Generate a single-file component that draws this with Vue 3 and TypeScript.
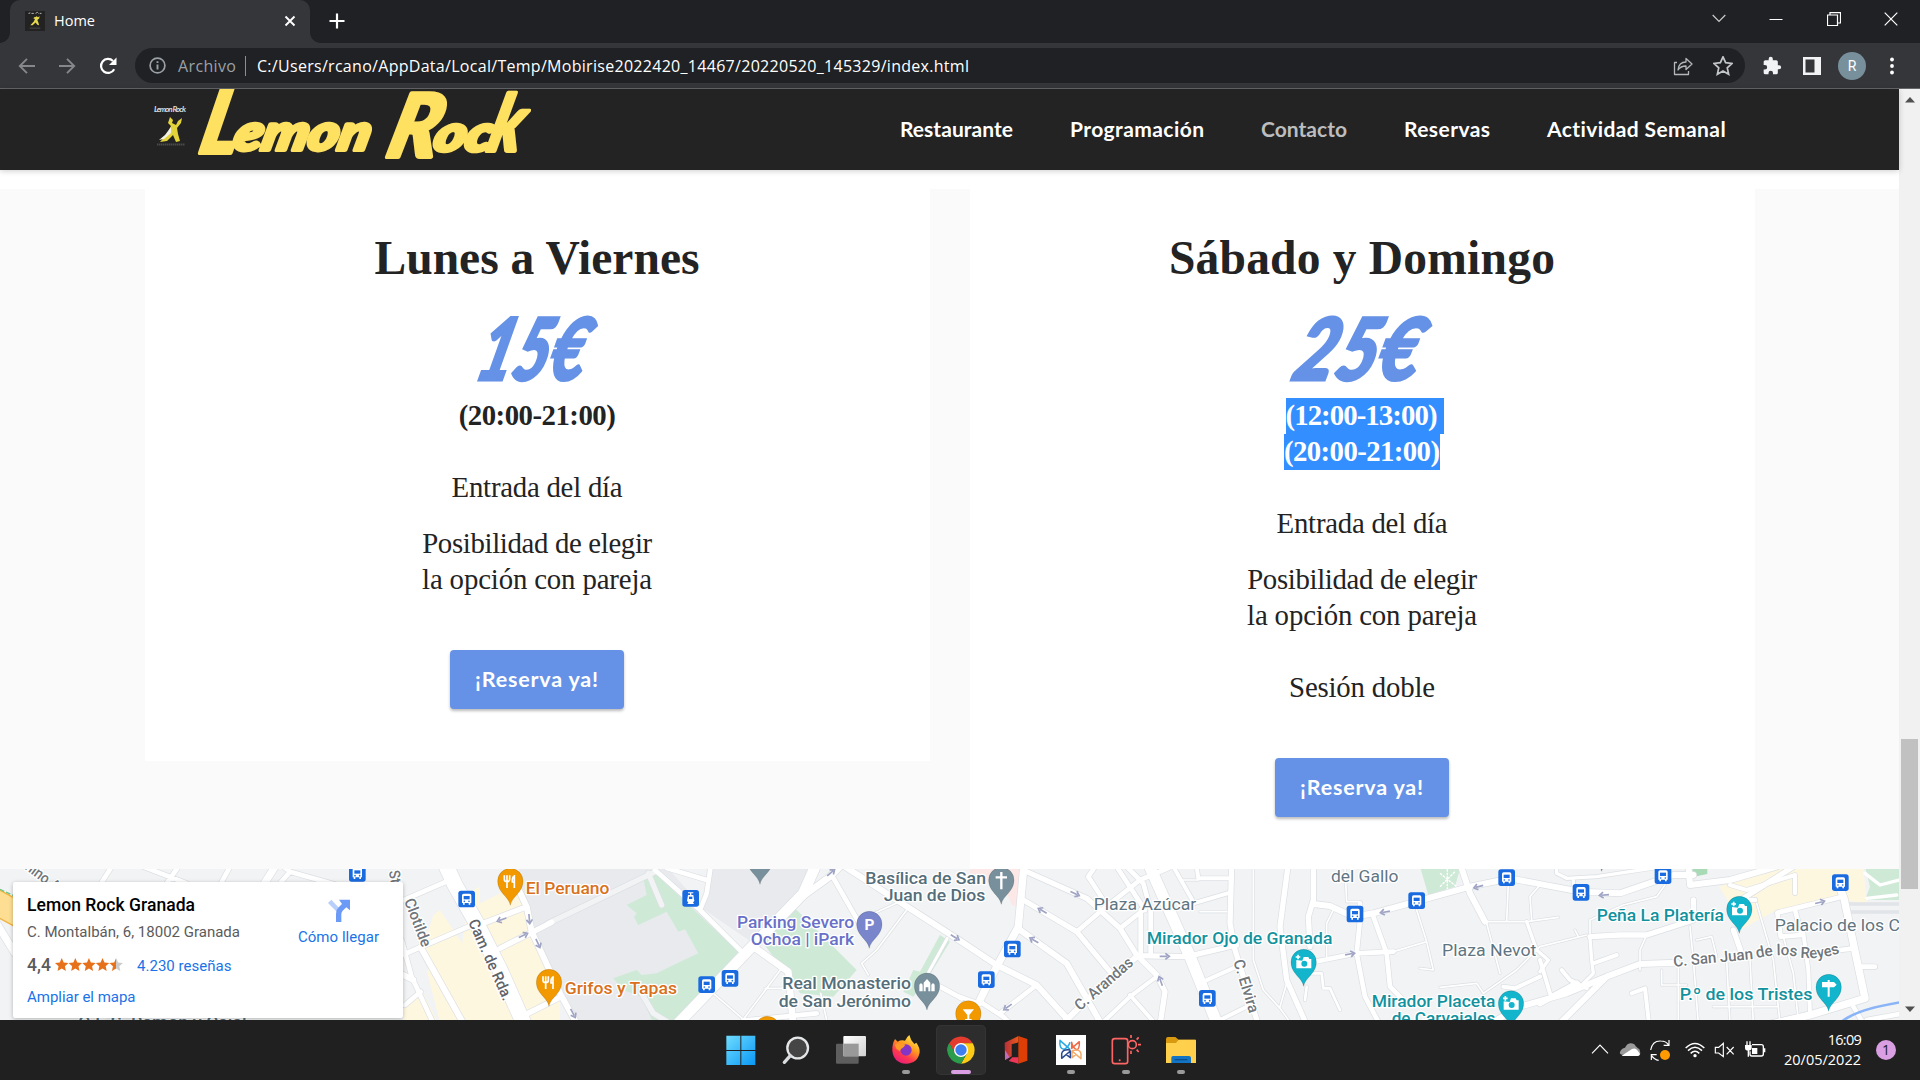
<script setup lang="ts">
interface Road { x: number; w: number; d: string; c?: string }
interface Label { x: number; y: number; len: number; t: string; c: string; r?: number; s?: number; wt?: number }
interface Pin { x: number; y: number; c: string; k: string }

// Spreads the letters of a line so that it fills the given width in pixels.
const vFit = {
  mounted(el: HTMLElement, binding: { value: number }) {
    const range = document.createRange()
    range.selectNodeContents(el)
    const natural = range.getBoundingClientRect().width
    const count = (el.textContent ?? '').trim().length
    el.style.letterSpacing = `${(binding.value - natural) / Math.max(1, count - 1)}px`
  },
}

const navItems = [
  { t: 'Restaurante', w: 113 },
  { t: 'Programación', w: 134 },
  { t: 'Contacto', w: 86, dim: true },
  { t: 'Reservas', w: 86 },
  { t: 'Actividad Semanal', w: 179 },
]

const T1 = 1440, T2 = 2880, T3 = 4320

const areas = [
  { x: 0, f: '#fef7e0', d: 'M1300 165L1320 150L1440 330V480H1400L1270 260ZM1209 430L1270 400L1310 480H1209ZM1400 100L1440 80V160Z' },
  { x: T1, f: '#e8eaed', d: 'M115 20H560L780 270L590 490H300L160 220L130 120ZM700 20H1010L960 110L820 250L660 140Z' },
  { x: T1, f: '#fef7e0', d: 'M-40 150L110 75L150 215L240 400V490H-120L-160 330L-60 300Z' },
  { x: T1, f: '#ceead6', d: 'M525 40L775 275L590 490H520L485 410L430 390L400 355L470 330L485 345L530 340L580 315L655 280L615 208L595 215L560 155L475 195L462 172L470 160L440 135L500 105L490 55Z' },
  { x: T1, f: '#ceead6', d: 'M945 145L1130 330L1060 410L960 400L880 290L850 250ZM1380 225L1410 245L1340 360L1300 410L1270 395L1300 330L1320 335Z' },
  { x: T2, f: '#fce8e6', d: 'M30 20H190L182 145L155 135L140 95L30 40Z' },
  { x: T2, f: '#ceead6', d: 'M1380 20H1500L1485 80L1405 105Z' },
  { x: T3, f: '#fef7e0', d: 'M838 80L1000 20H1270L1280 130L1200 120L1000 155L900 210L880 150Z' },
  { x: T3, f: '#ceead6', d: 'M1275 20H1377V120H1275L1290 80Z' },
  { x: T3, f: '#a8dab5', d: 'M755 20H802V42L762 50Z' },
]

const roads: Road[] = [
  { x: 0, w: 14, d: 'M335 20L300 75M430 20L560 70M535 20L500 70M690 20L660 75M870 35L1010 75M850 20L870 35L840 70' },
  { x: 0, w: 22, d: 'M825 20L790 75M-10 190L45 280' },
  { x: 0, w: 14, d: 'M1200 125L1350 60M1200 288L1440 185M1215 435L1262 395M1205 240L1235 350L1300 490' },
  { x: 0, w: 18, d: 'M1262 262L1390 490M1200 340L1240 360' },
  { x: 0, w: 46, d: 'M1335 10L1365 75L1430 190L1500 330L1580 510' },
  { x: T1, w: 16, c: '#f1f3f4', d: 'M205 190L520 38M505 40L545 135M485 400L520 460L570 490' },
  { x: T1, w: 16, d: 'M10 190L140 140M60 265L150 220L215 187M140 462L240 412' },
  { x: T1, w: 18, d: 'M100 55L140 140L155 215L190 290L240 400L295 500' },
  { x: T1, w: 14, d: 'M525 30L660 150L780 270M560 24L680 60M692 20L680 100L660 150' },
  { x: T1, w: 32, d: 'M590 495L830 245L970 100L1010 10' },
  { x: T1, w: 20, d: 'M960 115L1050 50L1080 20M820 260L925 335L940 500' },
  { x: T1, w: 14, d: 'M1055 45L1155 220M790 482L1010 460M1380 380L1445 415' },
  { x: T1, w: 18, d: 'M1095 20L1440 242L1550 315L1670 375L1760 475' },
  { x: T1, w: 5, d: 'M1280 150L1190 270L1145 310L1165 345M1270 120L1160 170M930 385H855M905 325L790 478L700 400M1022 400L1040 480' },
  { x: T1, w: 9, d: 'M1402 235L1345 338' },
  { x: T2, w: 22, d: 'M192 15L175 200L110 320L60 420' },
  { x: T2, w: 16, d: 'M200 35L380 115L480 205L530 285L590 345L615 395L600 495M190 120L350 215L450 335' },
  { x: T2, w: 18, d: 'M180 210L320 310L420 485M300 500L380 420L530 290' },
  { x: T2, w: 14, d: 'M60 425L130 470L160 500M120 460L230 375M350 215L420 155L540 60L625 24M405 20L385 50L430 120M470 20L555 150M500 20L550 70L572 150V285M542 150V285M480 205L550 150' },
  { x: T2, w: 16, d: 'M530 287L680 290L830 255' },
  { x: T2, w: 34, d: 'M565 10L690 290L775 500' },
  { x: T2, w: 12, d: 'M640 20L700 125M710 20L715 55H810M700 130L810 98M730 365L830 320M770 485L860 440M420 495L510 410L590 350M510 405L585 490M0 410L60 432' },
  { x: T2, w: 16, d: 'M815 15L810 190L825 270L850 350L895 495' },
  { x: T2, w: 5, d: 'M670 60H715M720 155H800M880 20V300L910 390L960 445L1000 500M1300 275L1400 245L1370 150M1400 245L1420 330L1380 325M1125 140L1100 190V290M1155 27L1160 125H1200M960 440L980 370' },
  { x: T2, w: 16, d: 'M985 10L960 200L980 360L1040 495M1060 10V120L1045 170L1050 260' },
  { x: T2, w: 18, d: 'M1060 132L1110 138L1180 170L1240 160L1530 80L1650 55L1860 95L1980 100L2140 45L2200 45' },
  { x: T2, w: 14, d: 'M1200 130V180L1190 280L1215 410L1260 495M1065 305L1190 280L1300 275M1240 170L1280 280L1290 380L1330 420' },
  { x: T2, w: 8, d: 'M1040 340H1085L1090 385H1110L1140 450M1040 380L1035 420' },
  { x: T3, w: 5, d: 'M135 185H260L355 172M140 190L180 340M205 70L200 185M300 75L270 110L275 180M620 225L600 270V330M750 200L760 300L775 490M860 300L870 490M950 130L1000 300L1020 490M930 300L940 490M1030 230L1060 340L1075 480M665 330V375H740M715 310V490M820 440H1010M770 240L815 230L830 290M0 382L110 370L130 400L230 330L300 260L440 225M405 210L415 230M675 75L650 110L550 135M450 220V180L550 135' },
  { x: T3, w: 18, d: 'M60 10L90 100L135 185M745 15L750 75L870 60L1010 20' },
  { x: T3, w: 10, d: 'M350 10V40L380 55L470 50L640 24M400 60V85M260 185L290 270L325 300L300 335M450 235L455 300L460 340L430 370' },
  { x: T3, w: 16, d: 'M450 230L540 225L620 225L760 180V120M880 210L905 280M910 115L1060 20' },
  { x: T3, w: 12, d: 'M460 310L530 285M300 300L330 400M365 330L390 360L440 385M190 380L225 385L300 350M575 400L615 385L628 500M870 75L920 90L1065 45V100M1110 465L1105 330L1090 220' },
  { x: T3, w: 18, d: 'M170 480L240 440L380 400L500 350L600 312L710 308M350 500L440 410L500 350M410 370L300 430' },
  { x: T3, w: 14, d: 'M1200 112L1012 158L1022 230L1085 225L1065 150M1260 320H1305M1240 265L1200 270M1240 440L1270 490M1280 480L1380 462M905 120H945' },
  { x: T3, w: 22, d: 'M1190 60L1212 115L1240 250L1275 415L1110 465L960 500' },
]

const labels: Label[] = [
  { x: 62, y: 18, len: 130, t: 'mino A', c: '#70757a', r: 37, s: 46 },
  { x: 1166, y: 34, len: 60, t: 'Sta', c: '#70757a', r: 80, s: 46 },
  { x: 1212, y: 122, len: 152, t: 'Clotilde', c: '#70757a', r: 69, s: 46 },
  { x: 1404, y: 186, len: 262, t: 'Cam. de Rda.', c: '#5f6368', r: 66, s: 46 },
  { x: 235, y: 503, len: 505, t: 'C.E.S. Ramón y Cajal', c: '#546e7a' },
  { x: T1 + 137, y: 102, len: 251, t: 'El Peruano', c: '#d9711c' },
  { x: T1 + 254, y: 403, len: 337, t: 'Grifos y Tapas', c: '#d9711c' },
  { x: T1 + 771, y: 204, len: 351, t: 'Parking Severo', c: '#6870c8' },
  { x: T1 + 812, y: 256, len: 310, t: 'Ochoa | iPark', c: '#6870c8' },
  { x: T1 + 907, y: 388, len: 386, t: 'Real Monasterio', c: '#546e7a' },
  { x: T1 + 896, y: 440, len: 397, t: 'de San Jerónimo', c: '#546e7a' },
  { x: T1 + 1156, y: 72, len: 362, t: 'Basílica de San', c: '#546e7a' },
  { x: T1 + 1211, y: 124, len: 305, t: 'Juan de Dios', c: '#546e7a' },
  { x: T2 + 401, y: 149, len: 308, t: 'Plaza Azúcar', c: '#5f7682', wt: 400 },
  { x: T2 + 560, y: 253, len: 557, t: 'Mirador Ojo de Granada', c: '#12929e' },
  { x: T2 + 1113, y: 65, len: 202, t: 'del Gallo', c: '#5f7682', wt: 400 },
  { x: T2 + 1235, y: 440, len: 371, t: 'Mirador Placeta', c: '#12929e' },
  { x: T2 + 1295, y: 492, len: 311, t: 'de Carvajales', c: '#12929e' },
  { x: T2 + 360, y: 454, len: 216, t: 'C. Arandas', c: '#70757a', r: -41, s: 46 },
  { x: T2 + 820, y: 304, len: 165, t: 'C. Elvira', c: '#70757a', r: 73, s: 46 },
  { x: T3 + 470, y: 184, len: 382, t: 'Peña La Platería', c: '#12929e' },
  { x: T3 + 1004, y: 213, len: 376, t: 'Palacio de los C', c: '#5f7682', wt: 400 },
  { x: T3 + 6, y: 287, len: 283, t: 'Plaza Nevot', c: '#5f7682', wt: 400 },
  { x: T3 + 719, y: 419, len: 398, t: 'P.º de los Tristes', c: '#12929e' },
]

const stops = [
  [1072, 40], [1400, 117], [T1 + 680, 374], [T1 + 750, 355], [T2 + 157, 267], [T2 + 79, 359],
  [T2 + 742, 415], [T2 + 1185, 162], [T2 + 1370, 122], [T3 + 200, 53], [T3 + 423, 97], [T3 + 669, 47], [T3 + 1201, 68],
]

const arrows = [
  [T1 + 65, 179, 160], [T1 + 148, 177, 85], [T1 + 130, 226, -25], [T1 + 174, 250, 65], [T1 + 279, 460, 62], [T1 + 1053, 38, -40], [T1 + 1425, 232, 32],
  [T2 + 345, 101, 25], [T2 + 247, 152, 210], [T2 + 222, 241, 210], [T2 + 143, 441, 145], [T2 + 614, 289, 0], [T2 + 602, 363, 250],
  [T2 + 1275, 156, 170], [T2 + 1170, 282, -10], [T3 + 115, 80, 165], [T3 + 492, 105, 175], [T3 + 1140, 127, -14],
]

const pins: Pin[] = [
  { x: T1 + 91, y: 63, c: '#f29900', k: 'food' },
  { x: T1 + 207, y: 366, c: '#f29900', k: 'food' },
  { x: T1 + 840, y: 0, c: '#78909c', k: '' },
  { x: T1 + 862, y: 507, c: '#f29900', k: '' },
  { x: T1 + 1168, y: 192, c: '#7986cb', k: 'park' },
  { x: T1 + 1341, y: 377, c: '#78909c', k: 'castle' },
  { x: T2 + 124, y: 60, c: '#78909c', k: 'cross' },
  { x: T2 + 25, y: 460, c: '#f29900', k: 'bar' },
  { x: T2 + 1031, y: 306, c: '#12b5cb', k: 'photo' },
  { x: T3 + 898, y: 147, c: '#12b5cb', k: 'photo' },
  { x: T3 + 213, y: 430, c: '#12b5cb', k: 'photo' },
  { x: T3 + 1166, y: 381, c: '#12b5cb', k: 'sign' },
  { x: T3 + 485, y: -39, c: '#12b5cb', k: '' },
]
const star = 'M10 0L12.9 6.4L20 7.2L14.7 12L16.2 19L10 15.4L3.8 19L5.3 12L0 7.2L7.1 6.4Z'
</script>

<template>
  <div class="screen">
    <div class="tabbar">
      <div class="tab">
        <svg class="favicon" viewBox="0 0 34 42" preserveAspectRatio="none">
          <rect width="34" height="42" fill="#222" />
          <path d="M6 5l3-1M11 5h4M18 5l3-2 2 2M25 5h3" stroke="#ddd" stroke-width="1.500" />
          <path d="M17 13l3-2 2 2 3-2-1 5-3 3 2 6 1 5-3-1-3-5-5 6-4 0 6-8 2-5-3-2 3-3z" fill="#e5d84e" />
          <path d="M8 36h18" stroke="#555" stroke-width="1.500" />
        </svg>
        <span v-fit="41" class="tab-title">Home</span>
        <svg class="tab-x" width="12" height="12" viewBox="0 0 12 12"><path d="M1.5 1.5l9 9M10.500 1.500l-9 9" stroke="#fff" stroke-width="1.9" /></svg>
      </div>
      <svg class="plus" width="16" height="16" viewBox="0 0 16 16"><path d="M8 .5v15M.5 8h15" stroke="#fff" stroke-width="2.200" /></svg>
      <div class="window-controls">
        <span><svg width="14" height="9" viewBox="0 0 14 9"><path d="M.7 1L7 7.500L13.300 1" fill="none" stroke="#ccc" stroke-width="1.200" /></svg></span>
        <span><svg width="14" height="14" viewBox="0 0 14 14"><path d="M.5 7.500h13" stroke="#fff" /></svg></span>
        <span><svg width="14" height="14" viewBox="0 0 14 14"><path d="M.5 3h10v10.500H.5zM3 3V.7h10.500V11H11" fill="none" stroke="#fff" stroke-width="1.200" /></svg></span>
        <span><svg width="14" height="14" viewBox="0 0 14 14"><path d="M.7.700l12.600 12.600M13.300.700L.7 13.300" stroke="#fff" stroke-width="1.200" /></svg></span>
      </div>
    </div>

    <div class="toolbar">
      <div class="nav-icons">
        <svg width="18" height="18" viewBox="0 0 18 18"><path d="M17 9H2M9 1.800L1.800 9L9 16.200" fill="none" stroke="#85878a" stroke-width="1.900" /></svg>
        <svg width="18" height="18" viewBox="0 0 18 18"><path d="M1 9h15M9 1.800L16.200 9L9 16.200" fill="none" stroke="#85878a" stroke-width="1.900" /></svg>
        <svg width="20" height="20" viewBox="0 0 20 20"><path d="M16.200 13.200A7 7 0 1 1 15 5" fill="none" stroke="#fff" stroke-width="2.200" /><path d="M18.500 1.500V9H11z" fill="#fff" /></svg>
      </div>
      <div class="omnibox">
        <svg width="17" height="17" viewBox="0 0 17 17"><circle cx="8.500" cy="8.500" r="7.400" fill="none" stroke="#9aa0a6" stroke-width="1.700" /><path d="M8.500 7.500v5M8.500 4.300v1.800" stroke="#9aa0a6" stroke-width="1.900" /></svg>
        <span v-fit="58" class="scheme">Archivo</span>
        <i class="bar"></i>
        <span v-fit="712" class="url">C:/Users/rcano/AppData/Local/Temp/Mobirise2022420_14467/20220520_145329/index.html</span>
        <div class="slots right">
          <span><svg width="20" height="20" viewBox="0 0 20 20"><path d="M4 6.500H1.500V18.500H15.500V15M5 14c.5-5 3.500-8 8-8V2.500L19 8l-6 5.500V10c-3.500 0-6 1-8 4z" fill="none" stroke="#b4b7ba" stroke-width="1.300" stroke-linejoin="round" /></svg></span>
          <span><svg width="20" height="20" viewBox="-1 -1 22 22"><path :d="star" fill="none" stroke="#c4c7ca" stroke-width="1.900" /></svg></span>
        </div>
      </div>
      <div class="slots">
        <span><svg width="20" height="20" viewBox="0 0 24 24"><path fill="#f1f3f4" d="M20.500 11H19V7a2 2 0 0 0-2-2h-4V3.500a2.500 2.500 0 0 0-5 0V5H4a2 2 0 0 0-2 2v3.800h1.500a2.700 2.700 0 0 1 0 5.400H2V20a2 2 0 0 0 2 2h3.800v-1.500a2.700 2.700 0 0 1 5.400 0V22H17a2 2 0 0 0 2-2v-4h1.500a2.500 2.500 0 0 0 0-5z" /></svg></span>
        <span><svg width="18" height="18" viewBox="0 0 18 18"><path fill="#f1f3f4" fill-rule="evenodd" d="M0 0H18V18H0ZM2.500 2.500V15.500H11.500V2.500Z" /></svg></span>
        <span><b class="avatar">R</b></span>
        <span><svg width="4" height="18" viewBox="0 0 4 18"><g fill="#fff"><circle cx="2" cy="2.500" r="1.900" /><circle cx="2" cy="9" r="1.900" /><circle cx="2" cy="15.500" r="1.900" /></g></svg></span>
      </div>
    </div>

    <div class="viewport">
      <div class="page">
        <header class="navbar">
          <svg class="brand" width="420" height="81" viewBox="140 89 420 81">
            <g>
              <text x="154" y="112" font-size="8" fill="#ddd" textLength="32" class="script small">Lemon Rock</text>
              <path d="M170 117l3 3-1 3 4 2 2-4 4-3-1 5-4 5 1 6 2 7-4 1-3-7-6 6-7 1 7-8 4-8-3-3z" fill="#e3d33a" />
              <path d="M171 127l-6 8-6 5 5-1 7-6z" fill="#f2f2e6" />
              <path d="M157 144.500h28" stroke="#4b4b4b" stroke-width="2" stroke-dasharray="1.500 .5" />
            </g>
            <g class="script" fill="#ffe161" stroke="#ffe161" stroke-width="4" stroke-linejoin="round">
              <text transform="translate(197 153) skewX(-13)"><tspan font-size="88" textLength="38" lengthAdjust="spacingAndGlyphs">L</tspan><tspan dx="-4" dy="-3" font-size="50" textLength="136" lengthAdjust="spacingAndGlyphs">emon</tspan></text>
              <text transform="translate(384 157) skewX(-15)"><tspan font-size="88" textLength="50" lengthAdjust="spacingAndGlyphs">R</tspan><tspan dx="-4" dy="-6" font-size="50" textLength="58" lengthAdjust="spacingAndGlyphs">oc</tspan><tspan dx="-4" font-size="78" textLength="32" lengthAdjust="spacingAndGlyphs">k</tspan></text>
            </g>
          </svg>
          <nav>
            <a v-for="n in navItems" :key="n.t" v-fit="n.w" :class="{ dim: n.dim }">{{ n.t }}</a>
          </nav>
        </header>

        <main class="pricing">
          <section class="card short">
            <h2 v-fit="325">Lunes a Viernes</h2>
            <svg class="price" width="200" height="110" viewBox="0 0 200 110">
              <text class="script" transform="translate(36 92) skewX(-15)" font-size="86" textLength="108" lengthAdjust="spacingAndGlyphs" fill="#6592e6" stroke="#6592e6" stroke-width="3">15€</text>
            </svg>
            <p class="line hours"><span v-fit="157">(20:00-21:00)</span></p>
            <p class="line gap-36"><span v-fit="171">Entrada del día</span></p>
            <p class="line gap-20"><span v-fit="230">Posibilidad de elegir</span></p>
            <p class="line"><span v-fit="230">la opción con pareja</span></p>
            <a class="button"><span v-fit="123">¡Reserva ya!</span></a>
          </section>
          <section class="card">
            <h2 v-fit="386">Sábado y Domingo</h2>
            <svg class="price" width="200" height="110" viewBox="0 0 200 110">
              <text class="script" transform="translate(28 92) skewX(-15)" font-size="86" textLength="125" lengthAdjust="spacingAndGlyphs" fill="#6592e6" stroke="#6592e6" stroke-width="3">25€</text>
            </svg>
            <p class="line hours selected wide"><span v-fit="152">(12:00-13:00)</span></p>
            <p class="line hours selected"><span v-fit="156">(20:00-21:00)</span></p>
            <p class="line gap-36"><span v-fit="171">Entrada del día</span></p>
            <p class="line gap-20"><span v-fit="230">Posibilidad de elegir</span></p>
            <p class="line"><span v-fit="230">la opción con pareja</span></p>
            <p class="line gap-36"><span v-fit="146">Sesión doble</span></p>
            <a class="button"><span v-fit="123">¡Reserva ya!</span></a>
          </section>
        </main>

        <div class="map">
          <svg class="map-canvas" width="1899" height="151" viewBox="0 27 5697 453">
            <defs>
              <path id="reyes-street" d="M5021 320L5260 297Q5340 276 5410 294Q5470 298 5530 275" />
            </defs>
            <rect y="27" width="5697" height="453" fill="#f1f3f4" />
            <path v-for="(a, i) in areas" :key="'a' + i" :d="a.d" :fill="a.f" :transform="`translate(${a.x})`" />
            <path d="M-10 85L45 115V200L-10 170Z" fill="#fdde93" stroke="#f3b23c" stroke-width="4" />
            <path d="M0 88L39 106" stroke="#6dc58b" stroke-width="4" stroke-dasharray="14 6" />
            <path d="M4320 27H4380L4365 75L4320 90Z" fill="#ceead6" />
            <path d="M4320 40L4370 80M4320 80L4365 35M4342 27V90" stroke="#fff" stroke-width="4" stroke-dasharray="8 3" />
            <path d="M5535 132H5697M5535 156H5697" stroke="#e1e4e8" stroke-width="10" />
            <g fill="none" stroke-linejoin="round" stroke-linecap="round">
              <path v-for="(r, i) in roads" :key="'c' + i" :d="r.d" :transform="`translate(${r.x})`" stroke="#dcdfe3" :stroke-width="r.w + 4" />
              <path v-for="(r, i) in roads" :key="'r' + i" :d="r.d" :transform="`translate(${r.x})`" :stroke="r.c ?? '#fff'" :stroke-width="r.w" />
              <path d="M5595 40L5640 75L5697 60M5600 115L5690 105" stroke="#fff" stroke-width="10" />
              <path d="M5525 485Q5570 448 5700 427" stroke="#8ab4f8" stroke-width="8" />
            </g>
            <g v-for="(a, i) in arrows" :key="'w' + i" :transform="`translate(${a[0]} ${a[1]}) rotate(${a[2]})`">
              <path d="M-15 0H8M2 -9L14 0L2 9" fill="none" stroke="#9fa3c4" stroke-width="5" />
            </g>
            <g v-for="(s, i) in stops" :key="'s' + i" :transform="`translate(${s[0]} ${s[1]})`">
              <rect x="-25" y="-25" width="50" height="50" rx="8" fill="#1a6be0" />
              <path d="M-14 12V-11Q-14 -16 -9 -16H9Q14 -16 14 -11V12H11V17H6V12H-6V17H-11V12Z" fill="#fff" />
              <path d="M-9 -9H9V1H-9Z" fill="#1a6be0" /><circle cx="-7" cy="7" r="2.500" fill="#1a6be0" /><circle cx="7" cy="7" r="2.500" fill="#1a6be0" />
            </g>
            <g transform="translate(2072 115)">
              <rect x="-25" y="-25" width="50" height="50" rx="8" fill="#1a6be0" />
              <path d="M-8 -18H8V-15H2V-10H8L11 8L7 12L10 17H-10L-7 12L-11 8L-8 -10H-2V-15H-8Z" fill="#fff" />
              <path d="M-5 -5H5V2H-5Z" fill="#1a6be0" />
            </g>
            <g class="labels">
              <text v-for="(l, i) in labels" :key="'l' + i" :transform="`translate(${l.x} ${l.y}) rotate(${l.r ?? 0})`" :font-size="l.s ?? 51" :font-weight="l.wt ?? 500" :fill="l.c" :textLength="l.len" lengthAdjust="spacingAndGlyphs">{{ l.t }}</text>
              <text font-size="46" font-weight="500" fill="#70757a"><textPath href="#reyes-street" textLength="504">C. San Juan de los Reyes</textPath></text>
            </g>
            <g v-for="(p, i) in pins" :key="'p' + i" :transform="`translate(${p.x} ${p.y})`">
              <path d="M0 73C-5 45 -38 36 -38 0A38 38 0 0 1 38 0C38 36 5 45 0 73Z" :fill="p.c" stroke="#0003" stroke-width="2" />
              <path v-if="p.k === 'food'" d="M-18 -17V-5Q-18 2 -10 2V21M-10 -17V0M-2 -17V-5Q-2 2 -10 2M12 21V-15Q5 -12 6 3H12" fill="none" stroke="#fff" stroke-width="5" />
              <text v-else-if="p.k === 'park'" x="0" y="17" text-anchor="middle" class="park">P</text>
              <path v-else-if="p.k === 'castle'" d="M-23 17V-3L-18 -8L-13 -3V17ZM-10 17V-9L0 -20L10 -9V17H4V5H-4V17ZM13 17V-3L18 -8L23 -3V17Z" fill="#fff" />
              <path v-else-if="p.k === 'cross'" d="M0 -24V28M-17 -8H17" stroke="#fff" stroke-width="7" />
              <path v-else-if="p.k === 'bar'" d="M-17 -12H17L3 5V17H10V20H-10V17H-3V5Z" fill="#fff" />
              <g v-else-if="p.k === 'photo'">
                <path d="M-22 -6L-4 -4L0 -15H14L17 -9H23V19H-22Z" fill="#fff" /><circle cx="2" cy="5" r="9" :fill="p.c" /><path d="M-17 -22V-8M-24 -15H-10" stroke="#fff" stroke-width="5" />
              </g>
              <path v-else-if="p.k === 'sign'" d="M-20 -15H-3V-21H3V-15H16L24 -7L16 1H3V29H-3V1H-20Z" fill="#fff" />
            </g>
          </svg>

          <div class="place">
            <div class="place-info">
              <div class="place-name"><span v-fit="168">Lemon Rock Granada</span></div>
              <div class="address"><span v-fit="213">C. Montalbán, 6, 18002 Granada</span></div>
              <div class="rating">
                <b v-fit="24">4,4</b>
                <svg width="68" height="15" viewBox="0 0 101 21">
                  <defs><linearGradient id="half"><stop offset=".5" stop-color="#e7711b" /><stop offset=".5" stop-color="#ccc" /></linearGradient></defs>
                  <path v-for="n in 5" :key="n" :d="star" :transform="`translate(${(n - 1) * 20.200} 1)`" :fill="n === 5 ? 'url(#half)' : '#e7711b'" />
                </svg>
                <a v-fit="94.500">4.230 reseñas</a>
              </div>
              <a class="larger"><span v-fit="108.500">Ampliar el mapa</span></a>
            </div>
            <div class="directions">
              <svg width="22" height="23" viewBox="0 0 66 69"><path d="M0 12L10 2L36 30L30 42Z" fill="#b8cffb" /><path d="M24 69V44Q24 32 32 25L42 15L33 2H66V34L55 25L44 35Q40 40 40 46V69Z" fill="#6b9bf6" /></svg>
              <a v-fit="81">Cómo llegar</a>
            </div>
          </div>
        </div>
      </div>

      <div class="scrollbar">
        <svg width="10" height="6" viewBox="0 0 10 6"><path d="M0 5.500L5 0L10 5.500Z" fill="#505050" /></svg>
        <i></i>
        <svg class="down" width="10" height="6" viewBox="0 0 10 6"><path d="M0 .5L5 6L10 .5Z" fill="#505050" /></svg>
      </div>
    </div>

    <footer class="taskbar">
      <div class="apps">
        <span><svg viewBox="0 0 90 90"><defs><linearGradient id="win" x1="0" y1="0" x2="1" y2="1"><stop stop-color="#6fdcff" /><stop offset="1" stop-color="#0a98f5" /></linearGradient></defs><path fill="url(#win)" d="M1 2H43V45H1ZM46 2H88V45H46ZM1 48H43V90H1ZM46 48H88V90H46Z" /></svg></span>
        <span><svg viewBox="0 0 90 90"><circle cx="50" cy="39" r="31" fill="#454545" stroke="#e4e6e8" stroke-width="7" /><path d="M28 62L10 82" stroke="#dadde0" stroke-width="10" stroke-linecap="round" /></svg></span>
        <span><svg viewBox="0 0 90 90"><defs><linearGradient id="tv" x1="0" y1="0" x2="1" y2="1"><stop stop-color="#fff" /><stop offset="1" stop-color="#d0d0d0" /></linearGradient></defs><rect y="26" width="68" height="60" rx="3" fill="#5e5e5e" /><rect x="22" y="3" width="68" height="61" rx="3" fill="url(#tv)" /><path d="M22 26H68V64H22Z" fill="#999" /></svg></span>
        <span><svg viewBox="0 0 90 90"><defs><linearGradient id="ff" x1=".8" y1="0" x2=".2" y2="1"><stop stop-color="#fff44f" /><stop offset=".4" stop-color="#ff9a1f" /><stop offset=".7" stop-color="#ff3750" /><stop offset="1" stop-color="#e21b86" /></linearGradient></defs><path d="M12 12L20 20Q30 14 42 17Q48 5 55 0Q59 17 70 27L76 23Q87 38 86 52Q80 86 45 86Q8 84 4 47Q3 27 12 12Z" fill="url(#ff)" /><circle cx="45" cy="45" r="17" fill="#8535c5" /><path d="M11 29Q26 20 43 30L36 38Q28 40 27 48L17 43Z" fill="#ff9a28" /></svg><i></i></span>
        <span class="active"><svg viewBox="0 0 90 90"><path d="M45 45L9.600 24.500A41 41 0 0 1 80.400 24.500H45Z" fill="#e33b2e" /><path d="M45 24.500H80.400A41 41 0 0 1 45 86L62.700 55.200Z" fill="#fdcb16" /><path d="M9.600 24.500A41 41 0 0 0 45 86L62.700 55.200L27.300 55.200Z" fill="#2a9c4b" /><path d="M45 24.500L9.600 24.500L27.300 55.200L45 45Z" fill="#e33b2e" /><path d="M9.600 24.500L27.300 55.200L9 60Q-2 43 9.600 24.500Z" fill="#2a9c4b" /><circle cx="45" cy="45" r="21" fill="#fff" /><circle cx="45" cy="45" r="17" fill="#3d7ff0" /></svg><i class="on"></i></span>
        <span><svg viewBox="0 0 90 90"><defs><linearGradient id="of"><stop stop-color="#b5303c" /><stop offset="1" stop-color="#e85a1a" /></linearGradient></defs><path d="M11 23L52 3V22L32 28V64L12 75Z" fill="url(#of)" /><path d="M52 3L79 12V77L52 86Z" fill="#dc3e06" /><path d="M23 78L34 67H52V86Z" fill="#ee3659" /><path d="M12 75L12 45L26 67Z" fill="#c26bb8" /></svg></span>
        <span><svg viewBox="0 0 90 90"><rect width="90" height="90" fill="#fff" /><g fill="none" stroke-width="4.500" stroke-linejoin="round"><path d="M42 43L12 16Q9 42 24 43Q37 38 42 22" stroke="#29a9e0" /><path d="M43 45Q20 42 17 56V70L43 48V68L30 58" stroke="#2b4a90" /><path d="M70 20L47 40V22Q50 38 62 44Q71 43 70 20Z" stroke="#ef6a45" /><path d="M48 47Q72 40 75 56V71L48 48V68L60 58" stroke="#f2ab6a" /></g></svg><i></i></span>
        <span><svg viewBox="0 0 90 90"><g fill="none" stroke="#ff6464" stroke-width="5"><rect x="4" y="11" width="46" height="75" rx="7" /><circle cx="64" cy="29" r="12" /><path d="M60 0V9M83 7L77 14M81 29H90M77 44L83 51M60 47V57" /></g><circle cx="26" cy="76" r="3" fill="#ff6464" /></svg><i></i></span>
        <span><svg viewBox="0 0 90 90"><path d="M0 12Q0 6 6 6H28L38 14H90V45H0Z" fill="#d99a10" /><path d="M0 24H30L38 14H86Q90 14 90 18V84H0Z" fill="#ffd04c" /><path d="M16 84V68Q16 63 21 63H69Q75 63 75 68V84Z" fill="#1474c4" /><path d="M26 74H64" stroke="#0b4e90" stroke-width="4" /></svg><i></i></span>
      </div>
      <div class="tray">
        <svg class="tray-icons" width="180" height="24" viewBox="0 0 540 72" fill="none">
          <path d="M6 46L30 21L54 46" stroke="#fff" stroke-width="3.500" />
          <path d="M90 42Q95 30 105 29Q115 10 133 19Q142 32 148 33Q153 48 149 50H96Q88 48 90 42Z" fill="#9a9a9a" /><path d="M95 53L126 33Q136 28 142 37L150 48Q148 55 143 54H98Z" fill="#fff" />
          <path d="M182 36Q187 8 212 9Q228 9 235 20M237 6V22H221M184 66V50H200M184 52Q193 65 206 67" stroke="#fff" stroke-width="3.500" /><circle cx="225" cy="51" r="15" fill="#ff9a00" />
          <path d="M287 30Q315 3 343 30M294 38Q315 18 336 38M302 46Q315 34 328 46" stroke="#fff" stroke-width="4.500" /><circle cx="315" cy="53" r="5" fill="#fff" />
          <path d="M376 28H386L400 16V56L386 45H376ZM410 27L431 49M431 27L410 49" stroke="#fff" stroke-width="3.500" />
          <path d="M486 20H514Q520 20 520 26V48Q520 54 514 54H485Q480 54 480 48V40M524 31V43" stroke="#fff" stroke-width="4" /><path d="M486 30H502V48H486ZM465 21H485V30Q485 38 475 38Q465 38 465 30ZM469 10H473V21H469ZM478 10H482V21H478ZM473 36H477V56H473Z" fill="#fff" />
        </svg>
        <div class="clock"><span v-fit="34">16:09</span><span v-fit="77">20/05/2022</span></div>
        <b class="badge">1</b>
      </div>
    </footer>
  </div>
</template>

<style>
html, body { margin: 0; background: #202124; overflow: hidden; }
</style>

<style scoped>
* { box-sizing: border-box; }
svg { display: block; flex: none; }
.screen { width: 1920px; height: 1080px; display: flex; flex-direction: column; overflow: hidden; font-family: "Open Sans", "Noto Sans", sans-serif; white-space: nowrap; }
.tabbar { height: 43px; background: #202124; display: flex; align-items: center; padding-left: 10px; }
.tab { position: relative; width: 300px; height: 43px; border-radius: 10px 10px 0 0; background: #35363a; display: flex; align-items: center; padding: 0 14px 2px 15px; }
.tab::before, .tab::after { content: ""; position: absolute; bottom: 0; width: 10px; height: 10px; }
.tab::before { left: -10px; background: radial-gradient(circle at 0 0, #202124 9.500px, #35363a 10px); }
.tab::after { right: -10px; background: radial-gradient(circle at 100% 0, #202124 9.500px, #35363a 10px); }
.favicon { width: 20px; height: 20px; }
.tab-title { margin-left: 9px; font-size: 14.500px; line-height: 20px; color: #fff; }
.tab-x { margin-left: auto; }
.plus { margin: 0 0 1px 19px; }
.window-controls { display: flex; margin-left: auto; width: 230px; padding-bottom: 6px; }
.window-controls span { width: 57.500px; height: 20px; display: flex; align-items: center; justify-content: center; }
.toolbar { height: 46px; background: #35363a; border-bottom: 1px solid #66676a; display: flex; align-items: center; padding-right: 8px; }
.nav-icons { width: 135px; padding-left: 18px; display: flex; align-items: center; gap: 22px; }
.omnibox { width: 1610px; height: 35px; border-radius: 18px; background: #202124; display: flex; align-items: center; padding: 0 2px 0 14px; margin-right: 7px; font-size: 16px; }
.scheme { margin-left: 12px; width: 58px; color: #9aa0a6; }
.bar { width: 1px; height: 20px; background: #8b8e92; margin: 0 11px 0 9px; }
.url { color: #fff; }
.slots { display: flex; }
.slots.right { margin-left: auto; }
.slots span { width: 40px; height: 34px; display: flex; align-items: center; justify-content: center; }
.avatar { width: 28px; height: 28px; border-radius: 50%; background: #78909c; color: #fff; font: 400 14px/28px Roboto, sans-serif; text-align: center; }

.viewport { height: 931px; display: flex; }
.page { width: 1899px; display: flex; flex-direction: column; background: #fff; }
.navbar { position: relative; z-index: 1; height: 81px; background: #232323; display: flex; padding-left: 140px; box-shadow: 0 1px 6px #0003; }
.script { font-family: Lato, sans-serif; font-weight: 900; font-style: italic; }
.small { font-weight: 700; }
nav { display: flex; margin: 26px 173px 0 auto; gap: 57px; font: 700 21px/28px Lato, sans-serif; color: #fff; }
nav a { display: block; }
nav a:nth-child(1) { width: 113px; }
nav a:nth-child(2) { width: 134px; }
nav a:nth-child(3) { width: 86px; }
nav a:nth-child(4) { width: 86px; }
nav a:nth-child(5) { width: 179px; }
.dim { color: #bdbdbd; }
.pricing { height: 680px; margin-top: 19px; background: #fafafa; padding: 0 144px 0 145px; display: flex; justify-content: space-between; align-items: flex-start; }
.card { width: 785px; height: 680px; padding: 40px 1px 0 0; background: #fff; display: flex; flex-direction: column; align-items: center; font-family: "Liberation Serif", serif; color: #232323; }
.card.short { height: 572px; }
h2 { margin: 0; font-size: 47.500px; line-height: 59px; height: 59px; font-weight: 700; }
.price { overflow: visible; }
.line { margin: 0; height: 36px; line-height: 34px; font-size: 28.800px; }
.hours { font-weight: 700; }
.selected { width: 156px; background: #338fff; color: #fff; }
.selected.wide { width: 158px; margin-left: 5px; }
.gap-36 { margin-top: 36px; }
.gap-20 { margin-top: 20px; }
.button { margin-top: 52px; width: 174px; height: 59px; border-radius: 4px; background: #6592e6; color: #fff; box-shadow: 0 2px 3px #0004; font: 700 21.500px/58px Lato, sans-serif; text-align: center; }
.map { position: relative; height: 151px; overflow: hidden; background: #f1f3f4; }
.labels text { font-family: Roboto, sans-serif; paint-order: stroke; stroke: #fff; stroke-width: 8px; stroke-linejoin: round; }
.park { font: 700 46px Roboto, sans-serif; fill: #fff; }
.place { position: absolute; left: 13px; top: 13px; width: 390px; height: 136px; background: #fff; border-radius: 2px; box-shadow: 0 1px 4px #0004; display: flex; padding: 0 24px 0 14px; justify-content: space-between; font-family: Roboto, sans-serif; font-size: 15px; }
.place a { color: #1a73e8; }
.place-name { margin-top: 12px; line-height: 22px; font-size: 17.500px; font-weight: 500; color: #000; }
.address { margin-top: 6px; line-height: 20px; color: #5b5b5b; }
.rating { margin-top: 12px; height: 22px; display: flex; align-items: center; }
.rating b { width: 28px; font-size: 17.500px; font-weight: 500; color: #5b5b5b; }
.rating svg { margin-bottom: 2px; }
.rating a { margin: 1px 0 0 14px; }
.larger { display: block; margin-top: 11px; line-height: 20px; }
.directions { width: 81px; padding-top: 17px; display: flex; flex-direction: column; align-items: center; }
.directions a { margin-top: 6px; line-height: 18px; }
.scrollbar { width: 21px; background: #f1f1f1; display: flex; flex-direction: column; align-items: center; }
.scrollbar svg { margin-top: 8px; }
.scrollbar i { width: 17px; height: 150px; margin-top: 636px; background: #c1c1c1; }
.scrollbar .down { margin-top: 117px; }

.taskbar { height: 60px; background: #202020; display: flex; align-items: center; }
.apps { margin-left: 715.500px; display: flex; gap: 5px; }
.apps span { position: relative; width: 50px; height: 50px; border-radius: 5px; display: flex; align-items: center; justify-content: center; }
.apps svg { width: 30px; height: 30px; }
.apps .active { background: #2d2d2d; box-shadow: inset 0 0 0 1px #343434; }
.apps i { position: absolute; left: 21px; bottom: 1px; width: 8px; height: 4px; border-radius: 2px; background: #9a9a9a; }
.apps i.on { left: 15px; width: 20px; background: #da9fe3; }
.tray { margin-left: auto; display: flex; align-items: center; padding-right: 24px; color: #fff; }
.clock { width: 91px; display: flex; flex-direction: column; align-items: flex-end; font-size: 14.500px; line-height: 20px; }
.badge { width: 20px; height: 20px; margin-left: 15px; border-radius: 50%; background: #da9fe3; color: #202020; font-size: 14px; font-weight: 400; line-height: 20px; text-align: center; }
</style>
